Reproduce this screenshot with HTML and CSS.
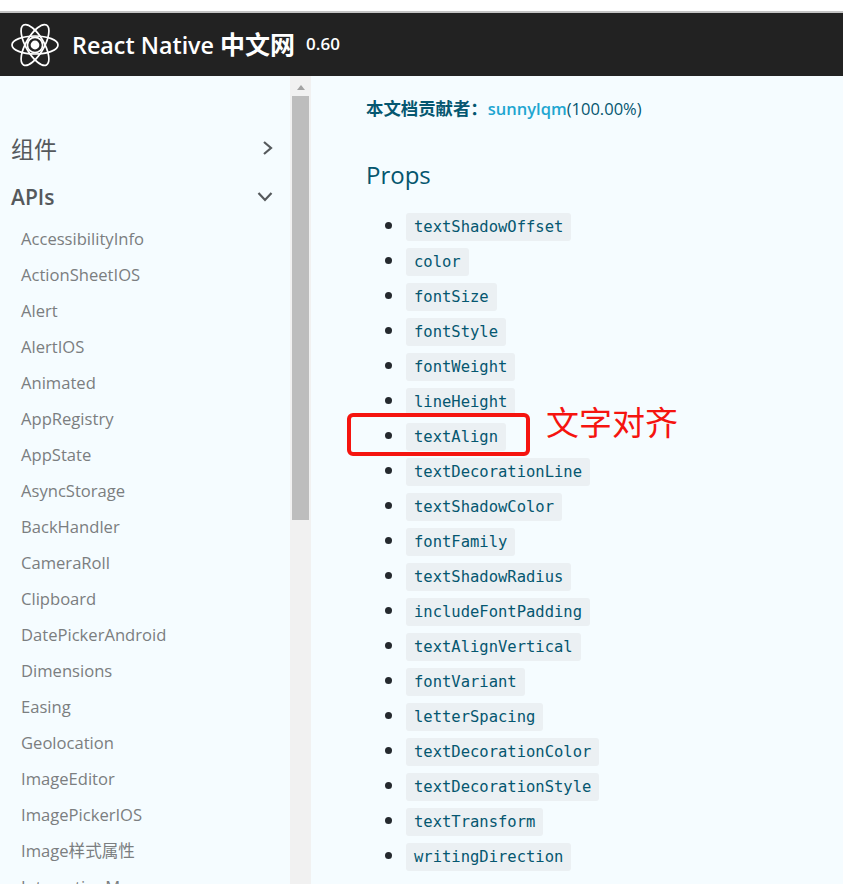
FILE: index.html
```html
<!DOCTYPE html>
<html lang="en">
<head>
    <meta charset="UTF-8">
    <meta name="viewport" content="width=device-width, initial-scale=1.0">
    <title>React Native 中文网</title>
    <link rel="stylesheet" href="styles.css">
</head>
<body>
    <header class="topbar">
        <svg class="logo" viewBox="0 0 50 46" width="50" height="46">
            <circle cx="25" cy="23" r="4.4" fill="#fff"></circle>
            <g fill="none" stroke="#fff" stroke-width="1.7">
                <circle cx="25" cy="23" r="7.6"></circle>
                <ellipse cx="25" cy="23" rx="23" ry="9"></ellipse>
                <ellipse cx="25" cy="23" rx="23" ry="9" transform="rotate(60 25 23)"></ellipse>
                <ellipse cx="25" cy="23" rx="23" ry="9" transform="rotate(120 25 23)"></ellipse>
            </g>
        </svg>
        <span class="site-title">React Native <b>中文网</b></span>
        <span class="version">0.60</span>
    </header>

    <div class="page">
        <nav class="sidebar">
            <div class="group-title group-cn">
                <span>组件</span>
                <svg viewBox="0 0 12 16" width="12" height="16"><path d="M3 2l7 6-7 6" fill="none" stroke="#55595c" stroke-width="2.2"></path></svg>
            </div>
            <div class="group-title group-api">
                <span>APIs</span>
                <svg viewBox="0 0 16 12" width="16" height="12"><path d="M1.5 2l6.500 7 6.500-7" fill="none" stroke="#55595c" stroke-width="2.2"></path></svg>
            </div>
            <ul class="nav-list">
                <li>AccessibilityInfo</li>
                <li>ActionSheetIOS</li>
                <li>Alert</li>
                <li>AlertIOS</li>
                <li>Animated</li>
                <li>AppRegistry</li>
                <li>AppState</li>
                <li>AsyncStorage</li>
                <li>BackHandler</li>
                <li>CameraRoll</li>
                <li>Clipboard</li>
                <li>DatePickerAndroid</li>
                <li>Dimensions</li>
                <li>Easing</li>
                <li>Geolocation</li>
                <li>ImageEditor</li>
                <li>ImagePickerIOS</li>
                <li>Image样式属性</li>
                <li>InteractionManager</li>
            </ul>
        </nav>

        <div class="scrollbar">
            <div class="scroll-arrow"></div>
            <div class="scroll-thumb"></div>
        </div>

        <main class="content">
            <p class="contributors"><b>本文档贡献者：</b><a>sunnylqm</a>(100.00%)</p>
            <h2>Props</h2>
            <ul class="props">
                <li><code>textShadowOffset</code></li>
                <li><code>color</code></li>
                <li><code>fontSize</code></li>
                <li><code>fontStyle</code></li>
                <li><code>fontWeight</code></li>
                <li><code>lineHeight</code></li>
                <li><code>textAlign</code></li>
                <li><code>textDecorationLine</code></li>
                <li><code>textShadowColor</code></li>
                <li><code>fontFamily</code></li>
                <li><code>textShadowRadius</code></li>
                <li><code>includeFontPadding</code></li>
                <li><code>textAlignVertical</code></li>
                <li><code>fontVariant</code></li>
                <li><code>letterSpacing</code></li>
                <li><code>textDecorationColor</code></li>
                <li><code>textDecorationStyle</code></li>
                <li><code>textTransform</code></li>
                <li><code>writingDirection</code></li>
            </ul>
        </main>
    </div>

    <div class="red-box"></div>
    <div class="red-note">文字对齐</div>
</body>
</html>
```

FILE: styles.css
```css
html, body {
    margin: 0;
    padding: 0;
    height: 884px;
    overflow: hidden;
}

body {
    position: relative;
    background: #f5fcff;
    font-family: "Open Sans", "Noto Sans CJK SC", sans-serif;
    border-top: 11px solid #fff;
    box-sizing: border-box;
}

.topbar {
    display: flex;
    align-items: center;
    height: 65px;
    border-top: 2px solid #c4c4c4;
    box-sizing: border-box;
    background: #222;
    color: #fff;
    padding-left: 10px;
}

.logo {
    margin-right: 12px;
}

.site-title {
    font-size: 23.300px;
    font-weight: 600;
    margin: 0 11px 4px 0;
}

.site-title b {
    font-size: 25px;
    font-weight: 700;
}

.version {
    font-size: 17px;
    font-weight: 600;
    margin-bottom: 3px;
}

.page {
    display: flex;
    height: 808px;
}

.sidebar {
    width: 290px;
    flex-shrink: 0;
    color: #55595c;
    overflow: hidden;
}

.group-title {
    display: flex;
    align-items: center;
    justify-content: space-between;
    padding: 0 17px 0 11px;
}

.group-cn {
    font-size: 23px;
    margin-top: 54px;
    height: 36px;
}

.group-api {
    font-size: 21px;
    font-weight: 600;
    margin-top: 13px;
    height: 36px;
}

.nav-list {
    list-style: none;
    margin: 6px 0 0;
    padding: 0 0 0 21px;
    font-size: 16.600px;
    color: #7b7e80;
}

.nav-list li {
    height: 36px;
    line-height: 36px;
    white-space: nowrap;
}

.scrollbar {
    width: 21px;
    flex-shrink: 0;
    background: #f1f1f1;
}

.scroll-arrow {
    width: 0;
    height: 0;
    margin: 9px auto 0 7px;
    border-left: 4.500px solid transparent;
    border-right: 4.500px solid transparent;
    border-bottom: 5px solid #a3a3a3;
}

.scroll-thumb {
    width: 17px;
    height: 424px;
    margin: 6px 0 0 2px;
    background: #bdbdbd;
}

.content {
    padding: 0 0 0 55px;
    color: #055770;
    flex: 1;
}

.contributors {
    font-size: 16.500px;
    margin: 21px 0 0;
    line-height: 22px;
}

.contributors b {
    font-size: 17.400px;
}

.contributors a {
    color: #1fa6d1;
    font-weight: 600;
}

h2 {
    font-size: 24px;
    font-weight: 500;
    margin: 38px 0 0;
    line-height: 34px;
    color: #05566e;
}

.props {
    margin: 20px 0 0;
    padding: 0 0 0 40px;
    color: #24292e;
    font-size: 16px;
}

.props li {
    height: 35px;
    line-height: 28px;
}

.props li::marker {
    font-size: 20px;
}

code {
    display: inline-block;
    height: 28px;
    line-height: 28px;
    padding: 0 8px;
    border-radius: 3px;
    background: #ebf0f3;
    color: #055770;
    font-family: "DejaVu Sans Mono", monospace;
    font-size: 15.500px;
    vertical-align: top;
}

.red-box {
    position: absolute;
    left: 347px;
    top: 402px;
    width: 175px;
    height: 35px;
    border: 4px solid #f5140f;
    border-radius: 6px;
}

.red-note {
    position: absolute;
    left: 546px;
    top: 390px;
    font-size: 33px;
    line-height: 44px;
    color: #f5140f;
}
```
